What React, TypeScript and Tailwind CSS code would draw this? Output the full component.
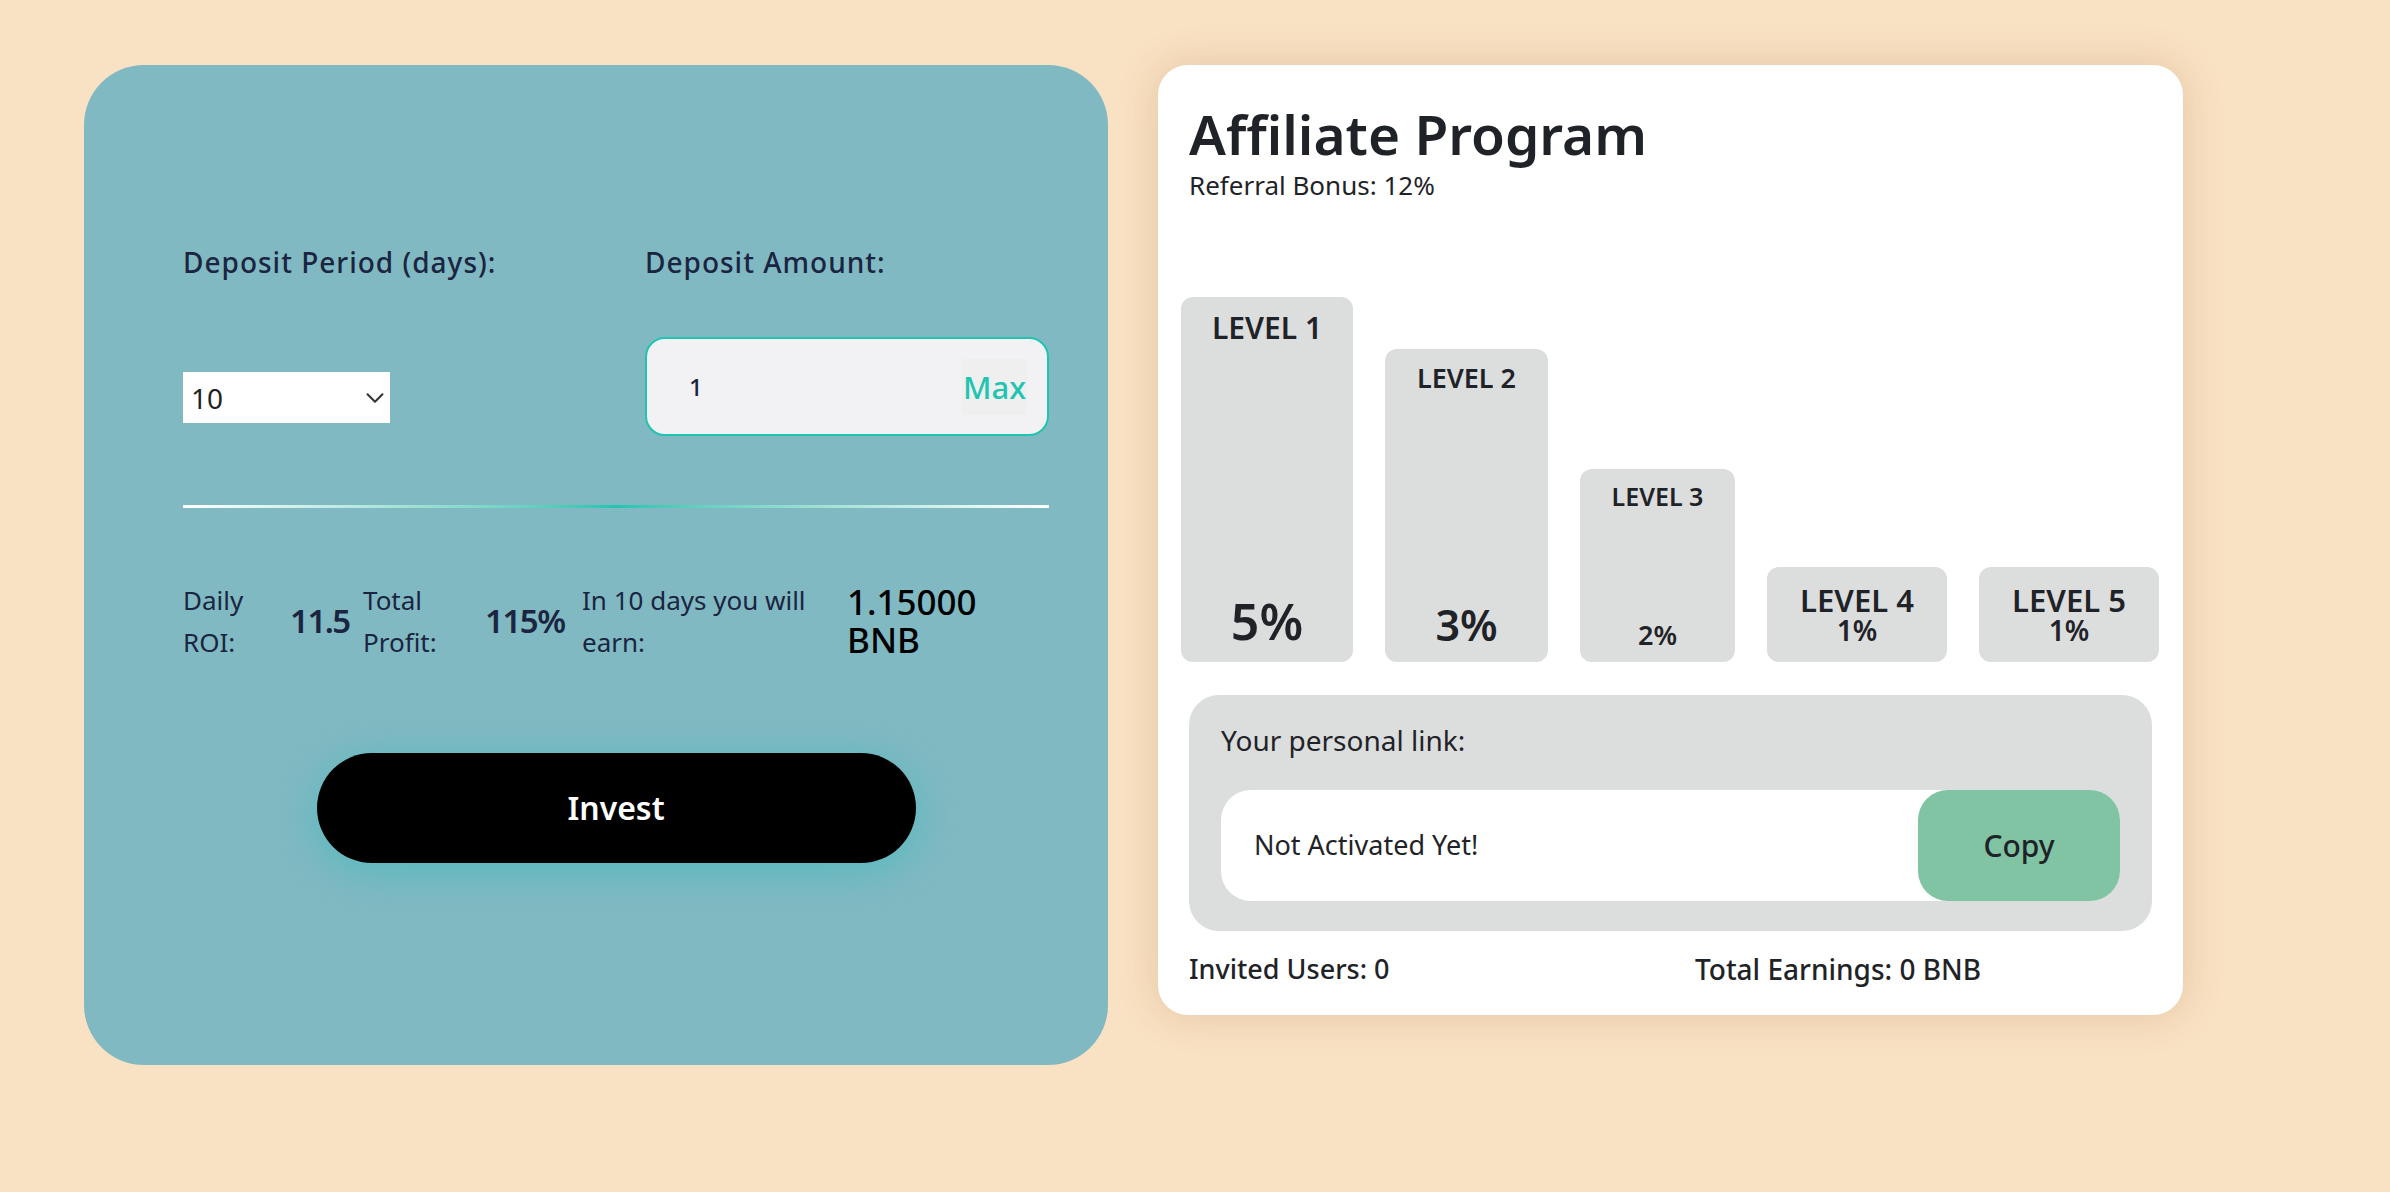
import { ChevronDown } from "lucide-react";

const levels = [
  { name: "LEVEL 1", pct: "5%", w: "w-[172px]", h: "h-[365px]", top: "text-[30px]", bottom: "text-[50px]" },
  { name: "LEVEL 2", pct: "3%", w: "w-[163px]", h: "h-[313px]", top: "text-[27px]", bottom: "text-[43px]" },
  { name: "LEVEL 3", pct: "2%", w: "w-[155px]", h: "h-[193px]", top: "text-[25px]", bottom: "text-[27px]" },
];

export default function App() {
  return (
    <div
      className="min-h-screen bg-[#f9e1c3] pl-[84px] pt-[65px]"
      style={{ fontFamily: '"Noto Sans", "Open Sans", sans-serif' }}
    >
      <div className="flex items-start gap-[50px]">
        {/* Deposit card */}
        <div className="w-[1024px] h-[1000px] rounded-[60px] bg-[#81b9c2] pl-[99px] pr-[59px] pt-[182px] text-[#1b2541]">
          <div className="flex items-start">
            <div className="w-[462px]">
              <label className="block text-[28px] leading-[30px] font-medium tracking-[1px]">Deposit Period (days):</label>
              <div className="mt-[95px] w-[207px] h-[51px] bg-white flex items-center justify-between pl-[8px]">
                <span className="text-[28px] text-[#222]">10</span>
                <ChevronDown className="h-[30px] w-[30px] text-[#333]" strokeWidth={1.6} />
              </div>
            </div>
            <div className="w-[404px]">
              <label className="block text-[28px] leading-[30px] font-medium tracking-[1px]">Deposit Amount:</label>
              <div className="mt-[60px] h-[99px] rounded-[20px] border-2 border-[#20c4b0] bg-[#f2f2f4] flex items-center justify-between pl-[42px] pr-[20px]">
                <span className="text-[24px] font-medium">1</span>
                <span className="bg-[#efefef] px-[1px] py-[8px] text-[31px] leading-[40px] font-medium text-[#20c4b0]">Max</span>
              </div>
            </div>
          </div>

          <div className="mt-[69px] h-[3px] bg-gradient-to-r from-white via-[#20c4b0] to-white" />

          <div className="mt-[71px] flex items-center">
            <div className="w-[107px] text-[26px] leading-[42px]">Daily<br />ROI:</div>
            <div className="w-[73px] text-[33px] font-semibold tracking-[-1.5px]">11.5</div>
            <div className="w-[122px] text-[26px] leading-[42px]">Total<br />Profit:</div>
            <div className="w-[97px] text-[33px] font-semibold tracking-[-1.5px]">115%</div>
            <div className="w-[265px] text-[26px] leading-[42px]">In 10 days you will<br />earn:</div>
            <div className="text-[35px] leading-[38px] font-medium text-black">1.15000<br />BNB</div>
          </div>

          <div className="mt-[90px] flex justify-center">
            <button className="w-[599px] h-[110px] rounded-full bg-black text-white text-[32px] font-semibold shadow-[0_8px_40px_rgba(70,185,190,0.75)]">
              Invest
            </button>
          </div>
        </div>

        {/* Affiliate card */}
        <div className="w-[1025px] h-[950px] rounded-[30px] bg-white px-[31px] pt-[40px] text-[#1f2328] shadow-[0_0_40px_rgba(120,80,20,0.18)]">
          <h1 className="text-[55px] leading-[58px] font-semibold">Affiliate Program</h1>
          <p className="mt-[7px] text-[26px] leading-[30px]">Referral Bonus: 12%</p>

          <div className="mt-[97px] -mx-[8px] h-[365px] flex items-end gap-[32px]">
            {levels.map((l) => (
              <div
                key={l.name}
                className={`${l.w} ${l.h} rounded-[12px] bg-[#dcdddd] flex flex-col items-center justify-between pt-[12px] pb-[10px] font-semibold`}
              >
                <span className={`${l.top} leading-tight`}>{l.name}</span>
                <span className={`${l.bottom} leading-tight`}>{l.pct}</span>
              </div>
            ))}
            <div className="w-[180px] h-[95px] rounded-[12px] bg-[#dcdddd] flex flex-col items-center justify-center font-semibold">
              <span className="text-[31px] leading-[31px]">LEVEL 4</span>
              <span className="text-[28px] leading-[29px]">1%</span>
            </div>
            <div className="w-[180px] h-[95px] rounded-[12px] bg-[#dcdddd] flex flex-col items-center justify-center font-semibold">
              <span className="text-[31px] leading-[31px]">LEVEL 5</span>
              <span className="text-[28px] leading-[29px]">1%</span>
            </div>
          </div>

          <div className="mt-[33px] rounded-[30px] bg-[#dcdddd] px-[32px] pt-[29px] pb-[30px]">
            <p className="text-[28px] leading-[32px]">Your personal link:</p>
            <div className="mt-[34px] h-[111px] rounded-[30px] bg-white flex items-center justify-between">
              <span className="pl-[33px] text-[27px]">Not Activated Yet!</span>
              <button className="w-[202px] h-full rounded-[30px] bg-[#80c4a4] text-[30px] font-medium">Copy</button>
            </div>
          </div>

          <div className="mt-[22px] flex text-[27px] leading-[32px] font-medium">
            <span className="w-[506px]">Invited Users: 0</span>
            <span className="text-[28px]">Total Earnings: 0 BNB</span>
          </div>
        </div>
      </div>
    </div>
  );
}
